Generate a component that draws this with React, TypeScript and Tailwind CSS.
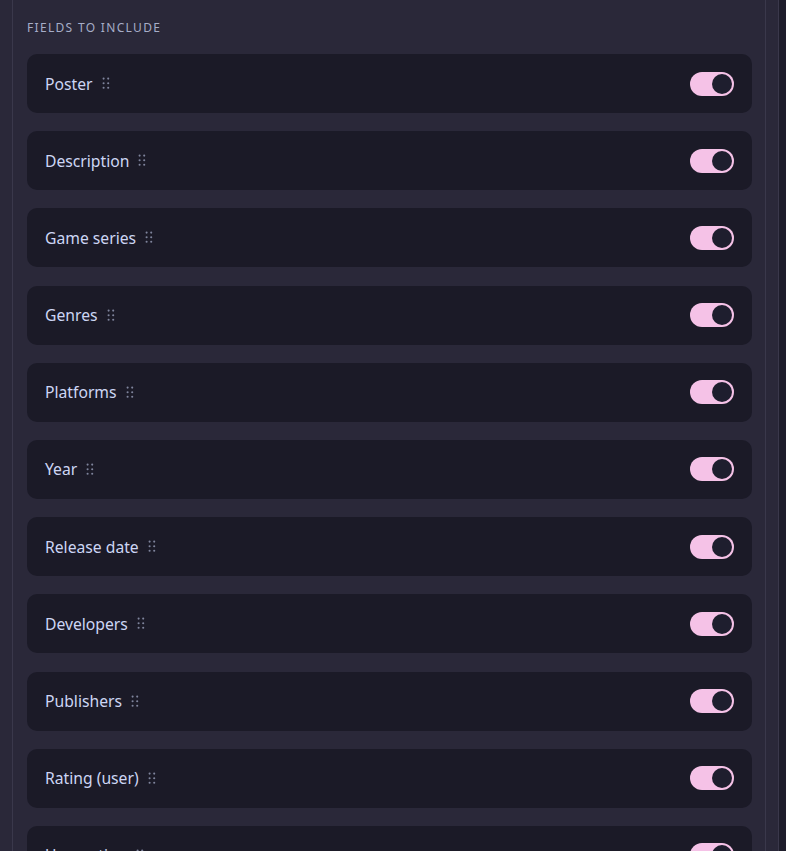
import React from "react";

const fields = [
  "Poster",
  "Description",
  "Game series",
  "Genres",
  "Platforms",
  "Year",
  "Release date",
  "Developers",
  "Publishers",
  "Rating (user)",
  "User rating",
];

function Grip() {
  return (
    <svg width="8" height="13" viewBox="0 0 8 13" className="shrink-0">
      {[1.6, 6.2].map((x) =>
        [1.6, 6.2, 10.8].map((y) => (
          <circle key={`${x}-${y}`} cx={x} cy={y} r="1.05" fill="#7f849c" />
        ))
      )}
    </svg>
  );
}

function Toggle() {
  return (
    <div className="relative h-[24px] w-[44px] shrink-0 rounded-full bg-[#f5c2e7]">
      <div className="absolute right-[2px] top-[2px] h-[20px] w-[20px] rounded-full bg-[#1e1e2e]" />
    </div>
  );
}

export default function App() {
  return (
    <div
      className="flex h-[851px] w-[786px] overflow-hidden bg-[#2a2839]"
      style={{ fontFamily: '"Noto Sans", "Open Sans", sans-serif' }}
    >
      <div className="w-[13px] shrink-0 border-r border-[#3a384b]" />
      <div className="w-[752px] shrink-0 pl-[14px] pr-[13px] pt-[20px]">
        <div className="mb-[18px] h-[16px] text-[12px] leading-[16px] tracking-[0.11em] text-[#a6adc8]">
          FIELDS TO INCLUDE
        </div>
        <div className="flex flex-col gap-[18.2px]">
          {fields.map((f) => (
            <div
              key={f}
              className="flex h-[59px] shrink-0 items-center justify-between rounded-[10px] bg-[#1b1a27] pl-[18px] pr-[18px]"
            >
              <div className="flex items-center gap-[9px]">
                <span className="text-[15.7px] leading-[22px] text-[#cdd6f4]">{f}</span>
                <Grip />
              </div>
              <Toggle />
            </div>
          ))}
        </div>
      </div>
      <div className="w-[14px] shrink-0 border-l border-r border-[#3a384b]" />
      <div className="flex-1 bg-[#1e1d2b]" />
    </div>
  );
}
